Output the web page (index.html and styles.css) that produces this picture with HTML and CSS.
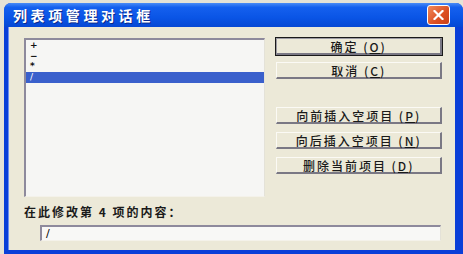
FILE: index.html
```html
<!doctype html>
<html>
<head>
<meta charset="UTF-8">
<title>列表项管理对话框</title>
<link rel="stylesheet" href="styles.css">
</head>
<body>
	<div class="window">
		<div class="titlebar">
			<span class="title">列表项管理对话框</span>
			<span class="close">
				<svg width="11" height="10" viewBox="0 0 11 10">
					<path d="M1.5 1 L9.5 9 M9.5 1 L1.5 9" stroke="#fff" stroke-width="2.2" stroke-linecap="square"/>
				</svg>
			</span>
		</div>
		<div class="client">
			<div class="top">
				<div class="listbox">
					<div class="row">+</div>
					<div class="row">−</div>
					<div class="row">*</div>
					<div class="row selected">/</div>
				</div>
				<div class="buttons">
					<div class="btn default">确定 (<u>O</u>)</div>
					<div class="btn">取消 (<u>C</u>)</div>
					<div class="btn gap">向前插入空项目 (<u>P</u>)</div>
					<div class="btn">向后插入空项目 (<u>N</u>)</div>
					<div class="btn">删除当前项目 (<u>D</u>)</div>
				</div>
			</div>
			<div class="label">在此修改第 4 项的内容：</div>
			<div class="edit">/</div>
		</div>
	</div>
</body>
</html>
```

FILE: styles.css
```css
* { box-sizing: border-box }
body {
	margin: 0;
	width: 463px;
	height: 254px;
	overflow: hidden;
	background: #e6e3d6;
	font-family: "Noto Sans CJK SC", "DejaVu Sans", sans-serif;
}
.window {
	margin: 3px 0 0 4px;
	width: 459px;
	height: 251px;
	display: flex;
	flex-direction: column;
	background: #0a3fd8;
	border-radius: 7px 7px 0 0;
	padding: 0 8px 4px 4px;
}
.titlebar {
	height: 24px;
	margin: 0 -8px 0 -4px;
	padding: 0 13px 0 9px;
	display: flex;
	align-items: center;
	justify-content: space-between;
	border-radius: 7px 7px 0 0;
	background: linear-gradient(#4a8cf6, #1560ee 18%, #0a55e6 60%, #0648d4);
}
.title {
	color: #fff;
	font-size: 14px;
	font-weight: bold;
	letter-spacing: 3.6px;
	text-shadow: 1px 1px 0 #0b2a8a;
}
.close {
	width: 23px;
	height: 20px;
	display: flex;
	align-items: center;
	justify-content: center;
	border: 1px solid #fff;
	border-radius: 3px;
	background: linear-gradient(135deg, #f08a5a, #dc4f22 60%, #c8401a);
}
.client {
	flex: 1;
	background: #ece9d8;
	padding: 11px 13px 0 15px;
	border-left: 1px solid #6d8ef0;
}
.top {
	display: flex;
	gap: 11px;
}
.listbox {
	width: 242px;
	height: 159px;
	background: #f6f6f4;
	border-top: 2px solid #8e8a9c;
	border-left: 2px solid #8e8a9c;
	border-right: 1px solid #e4e2d8;
	border-bottom: 1px solid #f4f2ea;
}
.row {
	height: 10.7px;
	line-height: 10.7px;
	padding-left: 4px;
	font-family: "DejaVu Sans", sans-serif;
	font-size: 9px;
	font-weight: bold;
	color: #111;
	overflow: hidden;
}
.row.selected {
	background: #3a60cc;
	color: #fff;
	font-weight: normal;
}
.buttons {
	width: 166px;
	display: flex;
	flex-direction: column;
	gap: 7px;
}
.btn {
	height: 17px;
	display: flex;
	align-items: center;
	justify-content: center;
	font-size: 12px;
	font-weight: 500;
	letter-spacing: 2px;
	color: #1a1a1a;
	background: #ece9d8;
	border-top: 1px solid #fbfaf5;
	border-left: 1px solid #fbfaf5;
	border-right: 2px solid #7a7884;
	border-bottom: 2px solid #7a7884;
}
.btn u { text-decoration: underline }
.btn.default {
	outline: 1px solid #1a1a1a;
	border-top-color: #9c9aa2;
	border-left-color: #9c9aa2;
}
.btn.gap { margin-top: 21px }
.btn.gap ~ .btn { margin-top: 1px }
.label {
	margin-top: 8px;
	height: 14px;
	line-height: 14px;
	font-size: 12px;
	font-weight: bold;
	letter-spacing: 2px;
	color: #1a1a1a;
}
.edit {
	margin: 6px 0 0 16px;
	width: 401px;
	height: 16px;
	line-height: 13px;
	padding-left: 4px;
	font-family: "DejaVu Sans", sans-serif;
	font-size: 11px;
	background: #f8f8f6;
	border-top: 2px solid #8e8a9c;
	border-left: 2px solid #8e8a9c;
	border-right: 1px solid #e4e2d8;
	border-bottom: 1px solid #f4f2ea;
}
```
